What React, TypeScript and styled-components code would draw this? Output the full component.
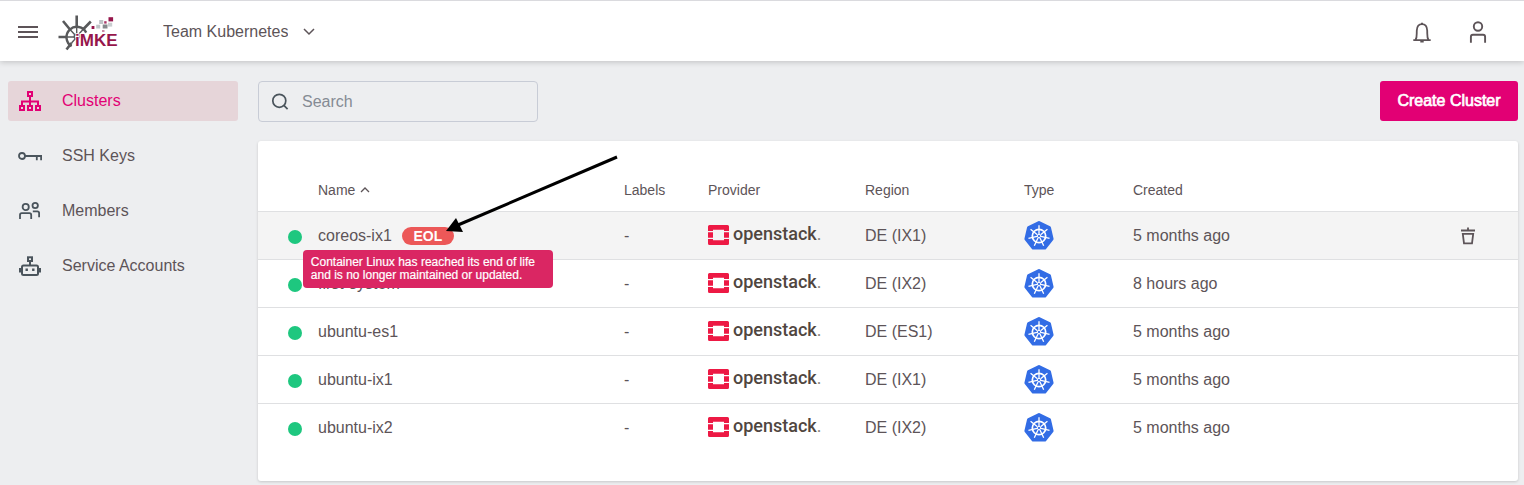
import React from 'react';
import styled, { createGlobalStyle } from 'styled-components';

const colors = {
  text: '#5d5458',
  icon: '#4a545c',
  pink: '#e20074',
  page: '#edeef0',
  line: '#dfe0e2',
};

const GlobalStyle = createGlobalStyle`
  *, *::before, *::after { box-sizing: border-box; }
  body {
    margin: 0;
    background: ${colors.page};
    color: ${colors.text};
    font-family: "Liberation Sans", Arial, sans-serif;
    font-size: 16px;
    line-height: 20px;
  }
  button, input, select { font: inherit; color: inherit; }
  svg { display: block; flex: none; }
`;

/* ---------- header ---------- */

const Header = styled.header`
  position: relative;
  display: flex;
  align-items: center;
  height: 61px;
  padding: 2px 34px 0 16px;
  background: #fff;
  border-top: 1px solid #dadade;
  box-shadow: 0 1px 6px rgba(0, 0, 0, 0.2);
`;

const IconButton = styled.button`
  display: flex;
  padding: 0;
  border: 0;
  background: none;
  cursor: pointer;
`;

const LogoLink = styled.a`
  margin-left: 18px;
  padding-top: 4px;
`;

const ProjectPicker = styled.label`
  display: flex;
  align-items: center;
  gap: 15px;
  margin-left: 43px;
`;

const ProjectSelect = styled.select`
  appearance: none;
  field-sizing: content;
  padding: 0;
  border: 0;
  background: none;
  cursor: pointer;
`;

const HeaderActions = styled.div`
  display: flex;
  gap: 32px;
  margin-left: auto;
`;

/* ---------- frame ---------- */

const Frame = styled.div`
  display: flex;
  gap: 20px;
  padding: 20px 6px 4px 8px;
`;

const Sidebar = styled.nav`
  display: flex;
  flex: none;
  flex-direction: column;
  gap: 15px;
  width: 230px;
`;

const NavItem = styled.a<{ $active?: boolean }>`
  display: flex;
  align-items: center;
  gap: 20px;
  height: 40px;
  padding: 0 10px;
  border-radius: 3px;
  text-decoration: none;
  color: ${(p) => (p.$active ? colors.pink : colors.text)};
  background: ${(p) => (p.$active ? '#e6d5d9' : 'transparent')};
  svg { color: ${(p) => (p.$active ? colors.pink : colors.icon)}; }
`;

const Main = styled.main`
  flex: 1;
  min-width: 0;
`;

const Toolbar = styled.div`
  display: flex;
  align-items: flex-start;
  justify-content: space-between;
  margin-bottom: 19px;
`;

const SearchBox = styled.label`
  display: flex;
  align-items: center;
  gap: 13px;
  width: 280px;
  height: 41px;
  padding: 0 12px;
  border: 1px solid #c8ccd6;
  border-radius: 4px;
  color: ${colors.icon};
`;

const SearchInput = styled.input`
  flex: 1;
  min-width: 0;
  padding: 0;
  border: 0;
  outline: 0;
  background: none;
  &::placeholder { color: #858b94; opacity: 1; }
`;

const PrimaryButton = styled.button`
  min-width: 138px;
  height: 40px;
  padding: 0 16px;
  border: 0;
  border-radius: 3px;
  background: ${colors.pink};
  color: #fff;
  -webkit-text-stroke: 0.7px #fff;
  cursor: pointer;
`;

/* ---------- table ---------- */

const Card = styled.section`
  padding: 30px 0;
  border-radius: 3px;
  background: #fff;
  box-shadow: 0 1px 3px rgba(0, 0, 0, 0.16);
`;

const Table = styled.table`
  width: 100%;
  table-layout: fixed;
  border-spacing: 0;
`;

const Col = styled.col<{ $width?: number }>`
  width: ${(p) => (p.$width ? `${p.$width}px` : 'auto')};
`;

const HeadCell = styled.th`
  height: 40px;
  padding: 0 0 2px;
  font-size: 14px;
  font-weight: 400;
  text-align: left;
`;

const SortButton = styled(IconButton)`
  align-items: center;
  gap: 5px;
`;

const Row = styled.tr<{ $hovered?: boolean }>`
  background: ${(p) => (p.$hovered ? '#f4f4f4' : 'transparent')};
`;

const Cell = styled.td`
  height: 48px;
  padding: 0;
  border-top: 1px solid ${colors.line};
`;

const StatusDot = styled.span`
  display: block;
  width: 14px;
  height: 14px;
  margin: 2px 0 0 30px;
  border-radius: 50%;
  background: #1ec77f;
`;

const NameLine = styled.div`
  display: flex;
  align-items: center;
  gap: 10px;
`;

const BadgeAnchor = styled.span`
  position: relative;
`;

const Badge = styled.span`
  display: block;
  width: 52px;
  height: 18px;
  border-radius: 9px;
  background: #ec5858;
  color: #fff;
  font-size: 14px;
  font-weight: 700;
  line-height: 18px;
  text-align: center;
`;

const Tooltip = styled.span`
  position: absolute;
  z-index: 2;
  top: 100%;
  left: 50%;
  width: 250px;
  margin-top: 5px;
  padding: 6px 8px;
  border-radius: 4px;
  background: #da2663;
  color: #fff;
  font-size: 12px;
  line-height: 13px;
  -webkit-text-stroke: 0.2px #fff;
  transform: translateX(-50%);
`;

const Pointer = styled.svg`
  position: absolute;
  z-index: 3;
  bottom: 12px;
  left: 42px;
  pointer-events: none;
`;

const Provider = styled.div`
  display: flex;
  align-items: center;
  gap: 4px;
  padding-bottom: 2px;
`;

const ProviderName = styled.span`
  padding-bottom: 2px;
  color: #50463f;
  font-family: Roboto, sans-serif;
  font-size: 18px;
  font-weight: 500;
`;

const ProviderMark = styled.span`
  color: #8b8580;
  font-weight: 400;
`;

/* ---------- drawings ---------- */

const MenuIcon = () => (
  <svg width="24" height="24" viewBox="0 0 24 24" stroke={colors.text} strokeWidth="2">
    <path d="M2 7h20M2 12h20M2 17h20" />
  </svg>
);

const Logo = () => (
  <svg width="62" height="38" viewBox="0 0 62 38" fill="none">
    <g stroke="#58595b">
      <path d="M28.2 17.600A10.400 10.400 0 1 0 13.600 31.200" strokeWidth="2.400" />
      <path
        d="M18.700 .500V11M.500 22H9M5 6L12 14.500M32.800 6.500L25.500 14M8.500 34.500L13.500 28"
        strokeWidth="2.600"
      />
      <path
        d="M18.700 11V20M9 22H17M12 14.500L17.500 20.500M25.500 14L20 20M13.500 28L17.500 23.500"
        strokeWidth="1.400"
      />
      <circle cx="18.700" cy="21.600" r="2.400" strokeWidth="1.500" />
    </g>
    <rect x="50.500" y="2.200" width="4.600" height="4.200" fill="#96164b" />
    <rect x="41.200" y="5" width="4" height="4" fill="#bfc4c7" />
    <rect x="50" y="7.700" width="4.200" height="3.900" fill="#c9cdcf" />
    <rect x="38.200" y="9.700" width="4" height="3.800" fill="#bfc4c7" />
    <rect x="44.700" y="9.500" width="4.800" height="4" fill="#85898c" />
    <rect x="46.200" y="6.200" width="2.400" height="2.400" fill="#a83566" />
    <rect x="33.600" y="11" width="2.800" height="3" fill="#96164b" />
    <rect x="44" y="15" width="2.500" height="2" fill="#c98aa4" />
    <text
      x="17"
      y="31"
      fontFamily="Liberation Sans, sans-serif"
      fontSize="17"
      fontWeight="700"
      fill="#96164b"
      stroke="#fff"
      strokeWidth="1.500"
      paintOrder="stroke"
    >
      iMKE
    </text>
  </svg>
);

const ChevronDown = () => (
  <svg width="12" height="8" viewBox="0 0 12 8" fill="none" stroke={colors.text} strokeWidth="1.5">
    <path d="M1 1l5 5 5-5" />
  </svg>
);

const ChevronUp = () => (
  <svg width="10" height="6" viewBox="0 0 10 6" fill="none" stroke={colors.text} strokeWidth="1.3">
    <path d="M1 5l4-4 4 4" />
  </svg>
);

const BellIcon = () => (
  <svg width="24" height="24" viewBox="0 0 24 24" fill="none" stroke={colors.text} strokeWidth="1.8">
    <path d="M3.300 20.200h17.400M5.600 19.800c1.500-2.400 1-5.300 1.200-9.300C7 6.800 9 4.200 12 4.200s5 2.600 5.200 6.300c.2 4-.3 6.900 1.200 9.300" />
    <path d="M12 2.800v1.600M10.300 21.500h3.400" strokeWidth="2" />
  </svg>
);

const UserIcon = () => (
  <svg width="24" height="24" viewBox="0 0 24 24" fill="none" stroke={colors.text} strokeWidth="1.900">
    <circle cx="12" cy="6.500" r="4.200" />
    <path d="M4.900 22.800V16.800q0-2 2-2h10.200q2 0 2 2v6" />
  </svg>
);

const ClustersIcon = () => (
  <svg width="24" height="24" viewBox="0 0 24 24" fill="none" stroke="currentColor" strokeWidth="2">
    <rect x="10" y="3" width="4" height="4" />
    <rect x="2" y="17" width="4" height="4" />
    <rect x="10" y="17" width="4" height="4" />
    <rect x="18" y="17" width="4" height="4" />
    <path d="M12 8v8M4 16v-3.500h16V16" />
  </svg>
);

const KeyIcon = () => (
  <svg width="24" height="24" viewBox="0 0 24 24" fill="none" stroke="currentColor" strokeWidth="1.800">
    <circle cx="4" cy="12" r="3" />
    <path d="M7 12h16.100v4.200M18.800 12v4.200" />
  </svg>
);

const MembersIcon = () => (
  <svg width="24" height="24" viewBox="0 0 24 24" fill="none" stroke="currentColor" strokeWidth="1.800">
    <circle cx="7.700" cy="8" r="3.100" />
    <circle cx="17.200" cy="6.500" r="2.700" />
    <path d="M2 20v-4q0-1.800 1.800-1.800h7.600q1.800 0 1.800 1.800v4M14.800 12.300h4.500q1.800 0 1.800 1.800v4.200" />
  </svg>
);

const RobotIcon = () => (
  <svg width="24" height="24" viewBox="0 0 24 24" fill="none" stroke="currentColor" strokeWidth="2">
    <rect x="10" y="3.300" width="4" height="3.700" />
    <path d="M12 8v3M2 14v4.500M22 14v4.500" />
    <rect x="4" y="11.500" width="16" height="9.500" rx="1.500" />
    <path d="M7.500 15.800h2.400M14.100 15.800h2.400" strokeWidth="2.400" />
  </svg>
);

const SearchIcon = () => (
  <svg width="18" height="18" viewBox="0 0 18 18" fill="none" stroke="currentColor" strokeWidth="1.700">
    <circle cx="8.300" cy="7.800" r="6.500" />
    <path d="M12.900 12.400l3.700 3.700" />
  </svg>
);

const TrashIcon = () => (
  <svg width="16" height="18" viewBox="0 0 16 18" fill="none" stroke={colors.text} strokeWidth="1.800">
    <path d="M1 3.500h14M8 .500v3M2.800 6.800h10.400L12 16.400H4z" />
  </svg>
);

const OpenStackMark = () => (
  <svg width="21" height="20" viewBox="0 0 21 20" fill="#ed1944">
    <path d="M1.500 0h18Q21 0 21 1.500V6h-5V4.800H5V6H0V1.500Q0 0 1.500 0z" />
    <path d="M0 7.200h5v5.600H0zM16 7.200h5v5.600h-5z" />
    <path d="M0 14h5v1.200h11V14h5v4.500q0 1.500-1.500 1.500h-18Q0 20 0 18.500z" />
  </svg>
);

const polar = (radius: number, index: number) => {
  const angle = (index * 2 * Math.PI) / 7 - Math.PI / 2;
  return `${(15 + radius * Math.cos(angle)).toFixed(2)} ${(15 + radius * Math.sin(angle)).toFixed(2)}`;
};
const SEVEN = [0, 1, 2, 3, 4, 5, 6];

const KubernetesIcon = () => (
  <svg width="30" height="30" viewBox="0 0 30 30" fill="none" role="img" aria-label="Kubernetes">
    <path
      d={`M${SEVEN.map((i) => polar(13.2, i)).join('L')}Z`}
      fill="#326ce5"
      stroke="#326ce5"
      strokeWidth="3.400"
      strokeLinejoin="round"
    />
    <g stroke="#fff">
      <circle cx="15" cy="15" r="6.700" strokeWidth="1.700" />
      <path d={SEVEN.map((i) => `M${polar(2, i)}L${polar(10.8, i)}`).join('')} strokeWidth="1.300" />
      <circle cx="15" cy="15" r="1.600" strokeWidth="1" />
    </g>
  </svg>
);

/* ---------- data ---------- */

const navItems = [
  { label: 'Clusters', Icon: ClustersIcon, active: true },
  { label: 'SSH Keys', Icon: KeyIcon },
  { label: 'Members', Icon: MembersIcon },
  { label: 'Service Accounts', Icon: RobotIcon },
];

const clusters = [
  { name: 'coreos-ix1', region: 'DE (IX1)', created: '5 months ago', eol: true },
  { name: 'first-system', region: 'DE (IX2)', created: '8 hours ago' },
  { name: 'ubuntu-es1', region: 'DE (ES1)', created: '5 months ago' },
  { name: 'ubuntu-ix1', region: 'DE (IX1)', created: '5 months ago' },
  { name: 'ubuntu-ix2', region: 'DE (IX2)', created: '5 months ago' },
];

const EolBadge = () => (
  <BadgeAnchor>
    <Badge aria-describedby="eol-note">EOL</Badge>
    <Tooltip id="eol-note" role="tooltip">
      Container Linux has reached its end of life and is no longer maintained or updated.
    </Tooltip>
    <Pointer width="176" height="80" viewBox="0 0 176 80" aria-hidden="true">
      <path d="M173 4L14 72" stroke="#000" strokeWidth="3" />
      <path d="M2 78L12 65L19 79z" />
    </Pointer>
  </BadgeAnchor>
);

export default function App() {
  return (
    <>
      <GlobalStyle />
      <Header>
        <IconButton type="button" aria-label="Menu">
          <MenuIcon />
        </IconButton>
        <LogoLink href="#" aria-label="iMKE home">
          <Logo />
        </LogoLink>
        <ProjectPicker>
          <ProjectSelect aria-label="Project">
            <option>Team Kubernetes</option>
          </ProjectSelect>
          <ChevronDown />
        </ProjectPicker>
        <HeaderActions>
          <IconButton type="button" aria-label="Notifications">
            <BellIcon />
          </IconButton>
          <IconButton type="button" aria-label="Account">
            <UserIcon />
          </IconButton>
        </HeaderActions>
      </Header>
      <Frame>
        <Sidebar>
          {navItems.map(({ label, Icon, active }) => (
            <NavItem key={label} href="#" $active={active}>
              <Icon />
              {label}
            </NavItem>
          ))}
        </Sidebar>
        <Main>
          <Toolbar>
            <SearchBox>
              <SearchIcon />
              <SearchInput type="text" placeholder="Search" aria-label="Search" />
            </SearchBox>
            <PrimaryButton type="button">Create Cluster</PrimaryButton>
          </Toolbar>
          <Card>
            <Table>
              <colgroup>
                <Col $width={60} />
                <Col $width={306} />
                <Col $width={84} />
                <Col $width={157} />
                <Col $width={159} />
                <Col $width={109} />
                <Col />
                <Col $width={58} />
              </colgroup>
              <thead>
                <tr>
                  <HeadCell />
                  <HeadCell>
                    <SortButton type="button">
                      Name <ChevronUp />
                    </SortButton>
                  </HeadCell>
                  <HeadCell>Labels</HeadCell>
                  <HeadCell>Provider</HeadCell>
                  <HeadCell>Region</HeadCell>
                  <HeadCell>Type</HeadCell>
                  <HeadCell>Created</HeadCell>
                  <HeadCell />
                </tr>
              </thead>
              <tbody>
                {clusters.map((cluster) => (
                  <Row key={cluster.name} $hovered={cluster.eol}>
                    <Cell>
                      <StatusDot />
                    </Cell>
                    <Cell>
                      <NameLine>
                        {cluster.name}
                        {cluster.eol && <EolBadge />}
                      </NameLine>
                    </Cell>
                    <Cell>-</Cell>
                    <Cell>
                      <Provider>
                        <OpenStackMark />
                        <ProviderName>
                          openstack<ProviderMark>.</ProviderMark>
                        </ProviderName>
                      </Provider>
                    </Cell>
                    <Cell>{cluster.region}</Cell>
                    <Cell>
                      <KubernetesIcon />
                    </Cell>
                    <Cell>{cluster.created}</Cell>
                    <Cell>
                      {cluster.eol && (
                        <IconButton type="button" aria-label={`Delete ${cluster.name}`}>
                          <TrashIcon />
                        </IconButton>
                      )}
                    </Cell>
                  </Row>
                ))}
              </tbody>
            </Table>
          </Card>
        </Main>
      </Frame>
    </>
  );
}
